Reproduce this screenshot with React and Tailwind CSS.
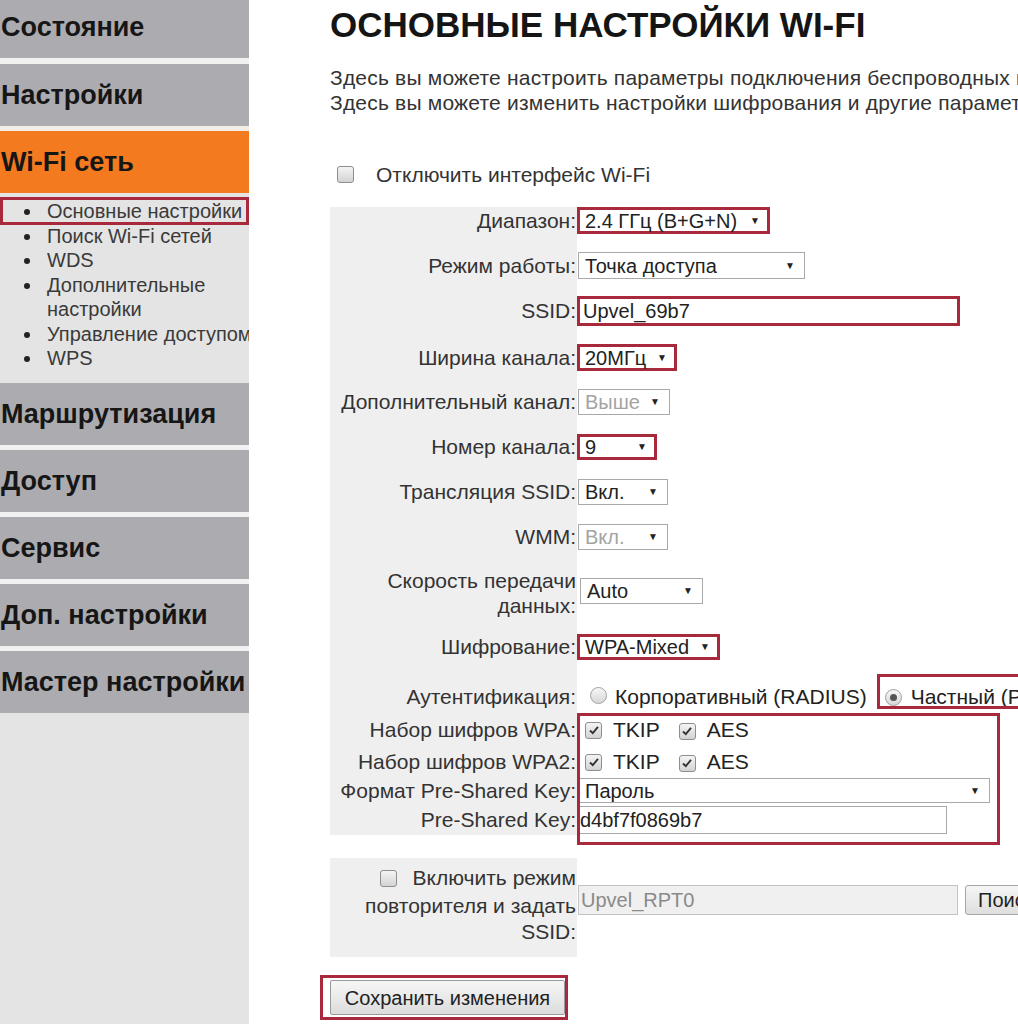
import React from 'react';

const RED = 'border-[#a8293b]';

function Select({ value, w, red, muted, h = 'h-[27px]' }) {
  return (
    <div
      className={`flex items-center justify-between bg-white ${h} ${w} ${
        red ? `border-[3px] ${RED} pl-[5px] pr-[7px]` : 'border border-[#a9a9a9] pl-[6px] pr-[9px]'
      }`}
    >
      <span className={`text-[20px] leading-none ${muted ? 'text-[#a3a3a3]' : 'text-[#222]'}`}>{value}</span>
      <span className="text-[10px] leading-none text-[#222]">▼</span>
    </div>
  );
}

function Check({ checked }) {
  return (
    <span className="inline-flex items-center justify-center w-[17px] h-[17px] rounded-[3px] border border-[#8e8e8e] bg-gradient-to-b from-[#f4f4f4] to-[#d3d3d3] shrink-0">
      {checked && (
        <svg viewBox="0 0 12 12" className="w-[12px] h-[12px]">
          <path d="M2 6.5 L4.8 9.2 L10 2.8" fill="none" stroke="#333" strokeWidth="1.9" />
        </svg>
      )}
    </span>
  );
}

function Radio({ checked }) {
  return (
    <span className="inline-flex items-center justify-center w-[17px] h-[17px] rounded-full border border-[#a0a0a0] bg-gradient-to-b from-[#f6f6f6] to-[#d8d8d8] shrink-0">
      {checked && <span className="w-[7px] h-[7px] rounded-full bg-[#555]" />}
    </span>
  );
}

function Row({ h, label, lead, children, pad = '' }) {
  return (
    <div className={`flex ${h}`}>
      <div className={`w-[247px] shrink-0 bg-[#efefef] text-right pr-[1px] text-[#333] ${lead} ${pad}`}>
        {label}
      </div>
      <div className={`flex items-start ${pad}`}>{children}</div>
    </div>
  );
}

const menuTop = ['Состояние', 'Настройки'];
const menuBottom = ['Маршрутизация', 'Доступ', 'Сервис', 'Доп. настройки', 'Мастер настройки'];

function MenuBlock({ title, active, first }) {
  return (
    <div
      className={`h-[62px] flex items-center pl-[1px] text-[27px] font-bold text-[#161616] ${
        active ? 'bg-[#f47a20]' : 'bg-[#acacb0]'
      } ${first ? '-mt-[4px]' : ''}`}
    >
      {title}
    </div>
  );
}

export default function App() {
  return (
    <div className="flex w-[1018px] h-[1024px] overflow-hidden bg-white font-['Liberation_Sans',Arial,sans-serif]">
      {/* Sidebar */}
      <aside className="w-[249px] shrink-0 bg-[#e4e4e4] flex flex-col overflow-hidden whitespace-nowrap">
        <MenuBlock title={menuTop[0]} first />
        <div className="h-[6px] bg-[#f1f1f1]" />
        <MenuBlock title={menuTop[1]} />
        <div className="h-[5px] bg-[#f3ede7]" />
        <MenuBlock title="Wi-Fi сеть" active />
        <ul className="h-[190px] pt-[6px] text-[20px] leading-[24.5px] text-[#3a3a3a]">
          {['Основные настройки', 'Поиск Wi-Fi сетей', 'WDS', 'Дополнительные|настройки', 'Управление доступом', 'WPS'].map(
            (item, i) => (
              <li key={item} className="relative flex items-start pl-[47px]">
                <span className="absolute left-[24px] top-[10px] w-[6px] h-[6px] rounded-full bg-[#222]" />
                <span>
                  {item.split('|').map((p, j) => (
                    <React.Fragment key={p}>
                      {j > 0 && <br />}
                      {p}
                    </React.Fragment>
                  ))}
                </span>
                {i === 0 && (
                  <span className={`absolute left-0 top-[-2px] w-[249px] h-[28px] border-[3px] ${RED}`} />
                )}
              </li>
            )
          )}
        </ul>
        {menuBottom.map((t, i) => (
          <React.Fragment key={t}>
            {i > 0 && <div className="h-[5px] bg-[#f1f1f1]" />}
            <MenuBlock title={t} />
          </React.Fragment>
        ))}
      </aside>

      {/* Main */}
      <main className="pl-[81px] min-w-0 whitespace-nowrap">
        <h1 className="pt-[5px] text-[35px] leading-[40px] font-bold text-[#151515]">ОСНОВНЫЕ НАСТРОЙКИ WI-FI</h1>
        <p className="mt-[20px] text-[21px] leading-[25px] text-[#333] tracking-[0.2px]">
          Здесь вы можете настроить параметры подключения беспроводных клиентов к сети.
          <br />
          Здесь вы можете изменить настройки шифрования и другие параметры беспроводной сети.
        </p>

        <div className="mt-[47px] flex items-center h-[25px] pl-[7px] text-[21px] text-[#333]">
          <Check />
          <span className="ml-[22px]">Отключить интерфейс Wi-Fi</span>
        </div>

        {/* Form table */}
        <div className="relative mt-[20px] text-[21px]">
          <Row h="h-[45px]" lead="leading-[27px]" label="Диапазон:">
            <Select value="2.4 ГГц (B+G+N)" w="w-[193px]" red />
          </Row>
          <Row h="h-[44px]" lead="leading-[27px]" label="Режим работы:">
            <div className="pl-[1px]">
              <Select value="Точка доступа" w="w-[227px]" />
            </div>
          </Row>
          <Row h="h-[48px]" lead="leading-[30px]" label="SSID:">
            <div className={`flex items-center h-[30px] w-[383px] border-[3px] ${RED} pl-[3px] text-[20px] text-[#222]`}>
              Upvel_69b7
            </div>
          </Row>
          <Row h="h-[45px]" lead="leading-[27px]" label="Ширина канала:">
            <Select value="20МГц" w="w-[100px]" red />
          </Row>
          <Row h="h-[45px]" lead="leading-[26px]" label="Дополнительный канал:">
            <div className="pl-[1px]">
              <Select value="Выше" w="w-[92px]" h="h-[26px]" muted />
            </div>
          </Row>
          <Row h="h-[45px]" lead="leading-[26px]" label="Номер канала:">
            <Select value="9" w="w-[80px]" h="h-[26px]" red />
          </Row>
          <Row h="h-[45px]" lead="leading-[26px]" label="Трансляция SSID:">
            <div className="pl-[1px]">
              <Select value="Вкл." w="w-[90px]" h="h-[26px]" />
            </div>
          </Row>
          <Row h="h-[44px]" lead="leading-[26px]" label="WMM:">
            <div className="pl-[1px]">
              <Select value="Вкл." w="w-[90px]" h="h-[26px]" muted />
            </div>
          </Row>
          <Row
            h="h-[66px]"
            lead="leading-[25px]"
            label={
              <>
                Скорость передачи
                <br />
                данных:
              </>
            }
          >
            <div className="pl-[3px] pt-[10px]">
              <Select value="Auto" w="w-[123px]" h="h-[26px]" />
            </div>
          </Row>
          <Row h="h-[50px]" lead="leading-[26px]" label="Шифрование:">
            <Select value="WPA-Mixed" w="w-[143px]" h="h-[26px]" red />
          </Row>
          <Row h="h-[32px]" lead="leading-[26px]" label="Аутентификация:">
            <div className="flex items-center h-[26px] text-[21px] text-[#222]">
              <span className="ml-[13px]">
                <Radio />
              </span>
              <span className="ml-[8px]">Корпоративный (RADIUS)</span>
              <span className="relative flex items-center ml-[18px]">
                <span className={`absolute -left-[8px] -top-[7px] w-[240px] h-[35px] border-[3px] ${RED}`} />
                <Radio checked />
                <span className="ml-[9px]">Частный (PSK)</span>
              </span>
            </div>
          </Row>
          <Row h="h-[32px]" lead="leading-[28px]" label="Набор шифров WPA:">
            <div className="flex items-center h-[28px] pl-[8px] text-[21px] text-[#222]">
              <Check checked />
              <span className="ml-[11px]">TKIP</span>
              <span className="ml-[19px]">
                <Check checked />
              </span>
              <span className="ml-[11px]">AES</span>
            </div>
          </Row>
          <Row h="h-[30px]" lead="leading-[28px]" label="Набор шифров WPA2:">
            <div className="flex items-center h-[28px] pl-[8px] text-[21px] text-[#222]">
              <Check checked />
              <span className="ml-[11px]">TKIP</span>
              <span className="ml-[19px]">
                <Check checked />
              </span>
              <span className="ml-[11px]">AES</span>
            </div>
          </Row>
          <Row h="h-[28px]" lead="leading-[25px]" label="Формат Pre-Shared Key:">
            <div className="pl-[1px]">
              <Select value="Пароль" w="w-[412px]" h="h-[25px]" />
            </div>
          </Row>
          <Row h="h-[29px]" lead="leading-[28px]" label="Pre-Shared Key:">
            <div className="pl-[1px]">
              <div className="flex items-center h-[28px] w-[369px] border border-[#a9a9a9] bg-white pl-[1px] text-[20px] text-[#222]">
                d4bf7f0869b7
              </div>
            </div>
          </Row>
          <span className={`absolute left-[247px] top-[506px] w-[423px] h-[132px] border-[3px] ${RED}`} />
        </div>

        {/* Repeater */}
        <div className="mt-[23px] flex text-[21px]">
          <div className="w-[247px] shrink-0 h-[99px] bg-[#efefef] text-right pr-[1px] pt-[7px] leading-[26px] text-[#333]">
            <span className="inline-flex items-center">
              <Check />
              <span className="ml-[16px]">Включить режим</span>
            </span>
            <br />
            повторителя и задать
            <br />
            SSID:
          </div>
          <div className="flex items-start shrink-0 pt-[27px] pl-[1px]">
            <div className="flex items-center h-[30px] w-[380px] border border-[#c4c4c4] bg-[#f0f0f0] pl-[2px] text-[20px] text-[#8a8a8a]">
              Upvel_RPT0
            </div>
            <div className="ml-[7px] flex items-center h-[30px] px-[12px] rounded-[3px] border border-[#a6a6a6] bg-gradient-to-b from-[#f6f6f6] to-[#dedede] text-[20px] text-[#222]">
              Поиск
            </div>
          </div>
        </div>

        {/* Save */}
        <div className={`mt-[18px] -ml-[10px] inline-block border-[3px] ${RED} pl-[7px] py-[2px]`}>
          <div className="flex items-center justify-center h-[35px] w-[235px] rounded-[2px] border border-[#9a9a9a] bg-gradient-to-b from-[#f7f7f7] to-[#dcdcdc] text-[20px] text-[#222]">
            Сохранить изменения
          </div>
        </div>
      </main>
    </div>
  );
}
